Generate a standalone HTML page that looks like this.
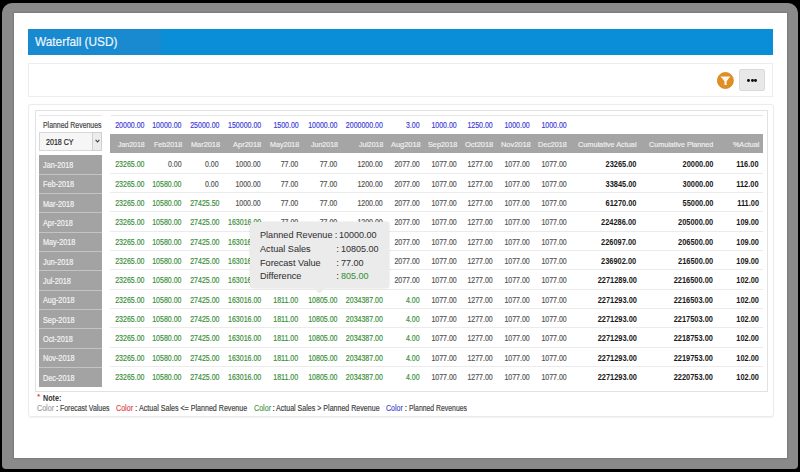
<!DOCTYPE html>
<html><head><meta charset="utf-8"><style>
html,body{margin:0;padding:0;}
body{width:800px;height:472px;position:relative;overflow:hidden;background:#000;font-family:"Liberation Sans",sans-serif;}
.b{position:absolute;}
.t{position:absolute;white-space:nowrap;line-height:1;-webkit-text-stroke:0.18px currentColor;}
</style></head><body>
<div class="b" style="left:2px;top:3px;width:796px;height:466px;background:#8a8a8a;border-radius:10px 10px 4px 4px;"></div>
<div class="b" style="left:13.6px;top:13.4px;width:773.1px;height:445.1px;background:#fff;box-shadow:0 0 1.5px 1px rgba(0,0,0,0.13);"></div>
<div class="b" style="left:28px;top:28.8px;width:745px;height:26.2px;background:#0a8ed8;"></div>
<div class="b" style="left:28px;top:28.8px;width:133px;height:26.2px;background:#1a8ad0;"></div>
<div class="t" style="left:35.00px;top:34.88px;font-size:13.2px;color:#eef7fd;transform:scaleX(0.8975653539773366);transform-origin:left 50%;">Waterfall (USD)</div>
<div class="b" style="left:28px;top:63px;width:745px;height:34px;box-sizing:border-box;border:1px solid #ededed;"></div>
<svg class="b" style="left:717px;top:72px" width="17" height="17" viewBox="0 0 17 17">
<circle cx="8.4" cy="8.5" r="8.0" fill="#e08f25" stroke="#d3841c" stroke-width="0.8"/>
<path d="M3.4 4.4 H13.3 Q10.4 7.6 9.6 9.6 V12.9 H7.5 V9.6 Q6.7 7.6 3.4 4.4 Z" fill="#fff" opacity="0.93"/>
</svg>
<div class="b" style="left:739px;top:69px;width:26px;height:22px;box-sizing:border-box;border:1px solid #d9d9d9;background:#e8e8e8;border-radius:2px;"></div>
<div class="b" style="left:747.30px;top:79.1px;width:2.8px;height:2.8px;border-radius:50%;background:#111;"></div>
<div class="b" style="left:750.80px;top:79.1px;width:2.8px;height:2.8px;border-radius:50%;background:#111;"></div>
<div class="b" style="left:754.30px;top:79.1px;width:2.8px;height:2.8px;border-radius:50%;background:#111;"></div>
<div class="b" style="left:28.2px;top:103.7px;width:745.8px;height:313.8px;box-sizing:border-box;border:1px solid #ebebeb;border-radius:3px;box-shadow:0 0.5px 1px rgba(0,0,0,0.06);"></div>
<div class="b" style="left:34.5px;top:110px;width:733.0px;height:281.5px;box-sizing:border-box;border:1px solid #e2e2e2;"></div>
<div class="b" style="left:38.5px;top:114.5px;width:63.5px;height:1.0px;background:#e6e6e6;"></div>
<div class="b" style="left:110.5px;top:114.5px;width:652.0px;height:1.0px;background:#e6e6e6;"></div>
<div class="t" style="left:43.40px;top:121.28px;font-size:8.5px;color:#444;transform:scaleX(0.8144796380090499);transform-origin:left 50%;">Planned Revenues</div>
<div class="b" style="left:39px;top:132.3px;width:62.7px;height:18.5px;box-sizing:border-box;border:1px solid #d8d8d8;background:#f6f6f6;"></div>
<div class="b" style="left:92.2px;top:132.3px;width:9.5px;height:18.5px;box-sizing:border-box;border:1px solid #cfcfcf;background:#ececec;"></div>
<svg class="b" style="left:94.5px;top:139px" width="5" height="4" viewBox="0 0 5 4"><path d="M0.6 0.8 L2.5 2.9 L4.4 0.8" stroke="#444" stroke-width="1.1" fill="none"/></svg>
<div class="t" style="left:45.80px;top:138.14px;font-size:8.3px;color:#222;transform:scaleX(0.8546135196143091);transform-origin:left 50%;">2018 CY</div>
<div class="t" style="right:656.00px;top:121.38px;font-size:8.5px;color:#3d3dd6;transform:scaleX(0.825);transform-origin:right 50%;">20000.00</div>
<div class="t" style="right:618.70px;top:121.38px;font-size:8.5px;color:#3d3dd6;transform:scaleX(0.825);transform-origin:right 50%;">10000.00</div>
<div class="t" style="right:581.00px;top:121.38px;font-size:8.5px;color:#3d3dd6;transform:scaleX(0.825);transform-origin:right 50%;">25000.00</div>
<div class="t" style="right:539.00px;top:121.38px;font-size:8.5px;color:#3d3dd6;transform:scaleX(0.825);transform-origin:right 50%;">150000.00</div>
<div class="t" style="right:501.50px;top:121.38px;font-size:8.5px;color:#3d3dd6;transform:scaleX(0.825);transform-origin:right 50%;">1500.00</div>
<div class="t" style="right:463.00px;top:121.38px;font-size:8.5px;color:#3d3dd6;transform:scaleX(0.825);transform-origin:right 50%;">10000.00</div>
<div class="t" style="right:417.00px;top:121.38px;font-size:8.5px;color:#3d3dd6;transform:scaleX(0.825);transform-origin:right 50%;">2000000.00</div>
<div class="t" style="right:380.00px;top:121.38px;font-size:8.5px;color:#3d3dd6;transform:scaleX(0.825);transform-origin:right 50%;">3.00</div>
<div class="t" style="right:343.50px;top:121.38px;font-size:8.5px;color:#3d3dd6;transform:scaleX(0.825);transform-origin:right 50%;">1000.00</div>
<div class="t" style="right:307.50px;top:121.38px;font-size:8.5px;color:#3d3dd6;transform:scaleX(0.825);transform-origin:right 50%;">1250.00</div>
<div class="t" style="right:270.50px;top:121.38px;font-size:8.5px;color:#3d3dd6;transform:scaleX(0.825);transform-origin:right 50%;">1000.00</div>
<div class="t" style="right:233.50px;top:121.38px;font-size:8.5px;color:#3d3dd6;transform:scaleX(0.825);transform-origin:right 50%;">1000.00</div>
<div class="b" style="left:110px;top:134.3px;width:653px;height:18.69999999999999px;background:#a5a5a5;"></div>
<div class="t" style="left:117.50px;top:140.70px;font-size:8px;color:#f0f0f0;transform:scaleX(0.8715484238820559);transform-origin:left 50%;">Jan2018</div>
<div class="t" style="left:153.75px;top:140.70px;font-size:8px;color:#f0f0f0;transform:scaleX(0.8945889245141115);transform-origin:left 50%;">Feb2018</div>
<div class="t" style="left:190.50px;top:140.70px;font-size:8px;color:#f0f0f0;transform:scaleX(0.9185572316585501);transform-origin:left 50%;">Mar2018</div>
<div class="t" style="left:233.00px;top:140.70px;font-size:8px;color:#f0f0f0;transform:scaleX(0.9340772886960116);transform-origin:left 50%;">Apr2018</div>
<div class="t" style="left:269.50px;top:140.70px;font-size:8px;color:#f0f0f0;transform:scaleX(0.8888551242118059);transform-origin:left 50%;">May2018</div>
<div class="t" style="left:310.50px;top:140.70px;font-size:8px;color:#f0f0f0;transform:scaleX(0.8796937362547854);transform-origin:left 50%;">Jun2018</div>
<div class="t" style="left:358.75px;top:140.70px;font-size:8px;color:#f0f0f0;transform:scaleX(0.8654146406744881);transform-origin:left 50%;">Jul2018</div>
<div class="t" style="left:390.75px;top:140.70px;font-size:8px;color:#f0f0f0;transform:scaleX(0.9288529836475041);transform-origin:left 50%;">Aug2018</div>
<div class="t" style="left:428.25px;top:140.70px;font-size:8px;color:#f0f0f0;transform:scaleX(0.91324200913242);transform-origin:left 50%;">Sep2018</div>
<div class="t" style="left:465.00px;top:140.70px;font-size:8px;color:#f0f0f0;transform:scaleX(0.9341931216931217);transform-origin:left 50%;">Oct2018</div>
<div class="t" style="left:500.75px;top:140.70px;font-size:8px;color:#f0f0f0;transform:scaleX(0.929070539095132);transform-origin:left 50%;">Nov2018</div>
<div class="t" style="left:538.25px;top:140.70px;font-size:8px;color:#f0f0f0;transform:scaleX(0.8978412772768083);transform-origin:left 50%;">Dec2018</div>
<div class="t" style="left:578.25px;top:140.70px;font-size:8px;color:#f0f0f0;transform:scaleX(0.9136520703590184);transform-origin:left 50%;">Cumulative Actual</div>
<div class="t" style="left:648.75px;top:140.70px;font-size:8px;color:#f0f0f0;transform:scaleX(0.8974247053688346);transform-origin:left 50%;">Cumulative Planned</div>
<div class="t" style="left:732.50px;top:140.70px;font-size:8px;color:#f0f0f0;transform:scaleX(0.8944543828264758);transform-origin:left 50%;">%Actual</div>
<div class="b" style="left:39px;top:154.8px;width:62.7px;height:232.0px;background:#a3a3a3;"></div>
<div class="b" style="left:39px;top:173.63px;width:62.7px;height:1.0px;background:#c4c4c4;"></div>
<div class="b" style="left:39px;top:192.96px;width:62.7px;height:1.0px;background:#c4c4c4;"></div>
<div class="b" style="left:39px;top:212.29px;width:62.7px;height:1.0px;background:#c4c4c4;"></div>
<div class="b" style="left:39px;top:231.62px;width:62.7px;height:1.0px;background:#c4c4c4;"></div>
<div class="b" style="left:39px;top:250.95px;width:62.7px;height:1.0px;background:#c4c4c4;"></div>
<div class="b" style="left:39px;top:270.28px;width:62.7px;height:1.0px;background:#c4c4c4;"></div>
<div class="b" style="left:39px;top:289.61px;width:62.7px;height:1.0px;background:#c4c4c4;"></div>
<div class="b" style="left:39px;top:308.94px;width:62.7px;height:1.0px;background:#c4c4c4;"></div>
<div class="b" style="left:39px;top:328.27px;width:62.7px;height:1.0px;background:#c4c4c4;"></div>
<div class="b" style="left:39px;top:347.6px;width:62.7px;height:1.0px;background:#c4c4c4;"></div>
<div class="b" style="left:39px;top:366.93px;width:62.7px;height:1.0px;background:#c4c4c4;"></div>
<div class="t" style="left:43.00px;top:160.97px;font-size:8.5px;color:#f4f4f4;transform:scaleX(0.855);transform-origin:left 50%;">Jan-2018</div>
<div class="t" style="left:43.00px;top:180.30px;font-size:8.5px;color:#f4f4f4;transform:scaleX(0.855);transform-origin:left 50%;">Feb-2018</div>
<div class="t" style="left:43.00px;top:199.63px;font-size:8.5px;color:#f4f4f4;transform:scaleX(0.855);transform-origin:left 50%;">Mar-2018</div>
<div class="t" style="left:43.00px;top:218.97px;font-size:8.5px;color:#f4f4f4;transform:scaleX(0.855);transform-origin:left 50%;">Apr-2018</div>
<div class="t" style="left:43.00px;top:238.29px;font-size:8.5px;color:#f4f4f4;transform:scaleX(0.855);transform-origin:left 50%;">May-2018</div>
<div class="t" style="left:43.00px;top:257.62px;font-size:8.5px;color:#f4f4f4;transform:scaleX(0.855);transform-origin:left 50%;">Jun-2018</div>
<div class="t" style="left:43.00px;top:276.95px;font-size:8.5px;color:#f4f4f4;transform:scaleX(0.855);transform-origin:left 50%;">Jul-2018</div>
<div class="t" style="left:43.00px;top:296.28px;font-size:8.5px;color:#f4f4f4;transform:scaleX(0.855);transform-origin:left 50%;">Aug-2018</div>
<div class="t" style="left:43.00px;top:315.61px;font-size:8.5px;color:#f4f4f4;transform:scaleX(0.855);transform-origin:left 50%;">Sep-2018</div>
<div class="t" style="left:43.00px;top:334.94px;font-size:8.5px;color:#f4f4f4;transform:scaleX(0.855);transform-origin:left 50%;">Oct-2018</div>
<div class="t" style="left:43.00px;top:354.27px;font-size:8.5px;color:#f4f4f4;transform:scaleX(0.855);transform-origin:left 50%;">Nov-2018</div>
<div class="t" style="left:43.00px;top:373.60px;font-size:8.5px;color:#f4f4f4;transform:scaleX(0.855);transform-origin:left 50%;">Dec-2018</div>
<div class="t" style="right:656.00px;top:160.38px;font-size:8.5px;color:#3a8f3a;transform:scaleX(0.825);transform-origin:right 50%;">23265.00</div>
<div class="t" style="right:618.70px;top:160.38px;font-size:8.5px;color:#555555;transform:scaleX(0.825);transform-origin:right 50%;">0.00</div>
<div class="t" style="right:581.00px;top:160.38px;font-size:8.5px;color:#555555;transform:scaleX(0.825);transform-origin:right 50%;">0.00</div>
<div class="t" style="right:539.00px;top:160.38px;font-size:8.5px;color:#555555;transform:scaleX(0.825);transform-origin:right 50%;">1000.00</div>
<div class="t" style="right:501.50px;top:160.38px;font-size:8.5px;color:#555555;transform:scaleX(0.825);transform-origin:right 50%;">77.00</div>
<div class="t" style="right:463.00px;top:160.38px;font-size:8.5px;color:#555555;transform:scaleX(0.825);transform-origin:right 50%;">77.00</div>
<div class="t" style="right:417.00px;top:160.38px;font-size:8.5px;color:#555555;transform:scaleX(0.825);transform-origin:right 50%;">1200.00</div>
<div class="t" style="right:380.00px;top:160.38px;font-size:8.5px;color:#555555;transform:scaleX(0.825);transform-origin:right 50%;">2077.00</div>
<div class="t" style="right:343.50px;top:160.38px;font-size:8.5px;color:#555555;transform:scaleX(0.825);transform-origin:right 50%;">1077.00</div>
<div class="t" style="right:307.50px;top:160.38px;font-size:8.5px;color:#555555;transform:scaleX(0.825);transform-origin:right 50%;">1277.00</div>
<div class="t" style="right:270.50px;top:160.38px;font-size:8.5px;color:#555555;transform:scaleX(0.825);transform-origin:right 50%;">1077.00</div>
<div class="t" style="right:233.50px;top:160.38px;font-size:8.5px;color:#555555;transform:scaleX(0.825);transform-origin:right 50%;">1077.00</div>
<div class="t" style="right:163.50px;top:160.38px;font-size:8.5px;color:#1a1a1a;font-weight:bold;-webkit-text-stroke:0;transform:scaleX(0.873);transform-origin:right 50%;">23265.00</div>
<div class="t" style="right:87.00px;top:160.38px;font-size:8.5px;color:#1a1a1a;font-weight:bold;-webkit-text-stroke:0;transform:scaleX(0.873);transform-origin:right 50%;">20000.00</div>
<div class="t" style="right:41.25px;top:160.38px;font-size:8.5px;color:#1a1a1a;font-weight:bold;-webkit-text-stroke:0;transform:scaleX(0.873);transform-origin:right 50%;">116.00</div>
<div class="b" style="left:110px;top:172.8px;width:653px;height:1.0px;background:#ebebeb;"></div>
<div class="t" style="right:656.00px;top:179.71px;font-size:8.5px;color:#3a8f3a;transform:scaleX(0.825);transform-origin:right 50%;">23265.00</div>
<div class="t" style="right:618.70px;top:179.71px;font-size:8.5px;color:#3a8f3a;transform:scaleX(0.825);transform-origin:right 50%;">10580.00</div>
<div class="t" style="right:581.00px;top:179.71px;font-size:8.5px;color:#555555;transform:scaleX(0.825);transform-origin:right 50%;">0.00</div>
<div class="t" style="right:539.00px;top:179.71px;font-size:8.5px;color:#555555;transform:scaleX(0.825);transform-origin:right 50%;">1000.00</div>
<div class="t" style="right:501.50px;top:179.71px;font-size:8.5px;color:#555555;transform:scaleX(0.825);transform-origin:right 50%;">77.00</div>
<div class="t" style="right:463.00px;top:179.71px;font-size:8.5px;color:#555555;transform:scaleX(0.825);transform-origin:right 50%;">77.00</div>
<div class="t" style="right:417.00px;top:179.71px;font-size:8.5px;color:#555555;transform:scaleX(0.825);transform-origin:right 50%;">1200.00</div>
<div class="t" style="right:380.00px;top:179.71px;font-size:8.5px;color:#555555;transform:scaleX(0.825);transform-origin:right 50%;">2077.00</div>
<div class="t" style="right:343.50px;top:179.71px;font-size:8.5px;color:#555555;transform:scaleX(0.825);transform-origin:right 50%;">1077.00</div>
<div class="t" style="right:307.50px;top:179.71px;font-size:8.5px;color:#555555;transform:scaleX(0.825);transform-origin:right 50%;">1277.00</div>
<div class="t" style="right:270.50px;top:179.71px;font-size:8.5px;color:#555555;transform:scaleX(0.825);transform-origin:right 50%;">1077.00</div>
<div class="t" style="right:233.50px;top:179.71px;font-size:8.5px;color:#555555;transform:scaleX(0.825);transform-origin:right 50%;">1077.00</div>
<div class="t" style="right:163.50px;top:179.71px;font-size:8.5px;color:#1a1a1a;font-weight:bold;-webkit-text-stroke:0;transform:scaleX(0.873);transform-origin:right 50%;">33845.00</div>
<div class="t" style="right:87.00px;top:179.71px;font-size:8.5px;color:#1a1a1a;font-weight:bold;-webkit-text-stroke:0;transform:scaleX(0.873);transform-origin:right 50%;">30000.00</div>
<div class="t" style="right:41.25px;top:179.71px;font-size:8.5px;color:#1a1a1a;font-weight:bold;-webkit-text-stroke:0;transform:scaleX(0.873);transform-origin:right 50%;">112.00</div>
<div class="b" style="left:110px;top:192.13px;width:653px;height:1.0px;background:#ebebeb;"></div>
<div class="t" style="right:656.00px;top:199.03px;font-size:8.5px;color:#3a8f3a;transform:scaleX(0.825);transform-origin:right 50%;">23265.00</div>
<div class="t" style="right:618.70px;top:199.03px;font-size:8.5px;color:#3a8f3a;transform:scaleX(0.825);transform-origin:right 50%;">10580.00</div>
<div class="t" style="right:581.00px;top:199.03px;font-size:8.5px;color:#3a8f3a;transform:scaleX(0.825);transform-origin:right 50%;">27425.50</div>
<div class="t" style="right:539.00px;top:199.03px;font-size:8.5px;color:#555555;transform:scaleX(0.825);transform-origin:right 50%;">1000.00</div>
<div class="t" style="right:501.50px;top:199.03px;font-size:8.5px;color:#555555;transform:scaleX(0.825);transform-origin:right 50%;">77.00</div>
<div class="t" style="right:463.00px;top:199.03px;font-size:8.5px;color:#555555;transform:scaleX(0.825);transform-origin:right 50%;">77.00</div>
<div class="t" style="right:417.00px;top:199.03px;font-size:8.5px;color:#555555;transform:scaleX(0.825);transform-origin:right 50%;">1200.00</div>
<div class="t" style="right:380.00px;top:199.03px;font-size:8.5px;color:#555555;transform:scaleX(0.825);transform-origin:right 50%;">2077.00</div>
<div class="t" style="right:343.50px;top:199.03px;font-size:8.5px;color:#555555;transform:scaleX(0.825);transform-origin:right 50%;">1077.00</div>
<div class="t" style="right:307.50px;top:199.03px;font-size:8.5px;color:#555555;transform:scaleX(0.825);transform-origin:right 50%;">1277.00</div>
<div class="t" style="right:270.50px;top:199.03px;font-size:8.5px;color:#555555;transform:scaleX(0.825);transform-origin:right 50%;">1077.00</div>
<div class="t" style="right:233.50px;top:199.03px;font-size:8.5px;color:#555555;transform:scaleX(0.825);transform-origin:right 50%;">1077.00</div>
<div class="t" style="right:163.50px;top:199.03px;font-size:8.5px;color:#1a1a1a;font-weight:bold;-webkit-text-stroke:0;transform:scaleX(0.873);transform-origin:right 50%;">61270.00</div>
<div class="t" style="right:87.00px;top:199.03px;font-size:8.5px;color:#1a1a1a;font-weight:bold;-webkit-text-stroke:0;transform:scaleX(0.873);transform-origin:right 50%;">55000.00</div>
<div class="t" style="right:41.25px;top:199.03px;font-size:8.5px;color:#1a1a1a;font-weight:bold;-webkit-text-stroke:0;transform:scaleX(0.873);transform-origin:right 50%;">111.00</div>
<div class="b" style="left:110px;top:211.46px;width:653px;height:1.0px;background:#ebebeb;"></div>
<div class="t" style="right:656.00px;top:218.36px;font-size:8.5px;color:#3a8f3a;transform:scaleX(0.825);transform-origin:right 50%;">23265.00</div>
<div class="t" style="right:618.70px;top:218.36px;font-size:8.5px;color:#3a8f3a;transform:scaleX(0.825);transform-origin:right 50%;">10580.00</div>
<div class="t" style="right:581.00px;top:218.36px;font-size:8.5px;color:#3a8f3a;transform:scaleX(0.825);transform-origin:right 50%;">27425.00</div>
<div class="t" style="right:539.00px;top:218.36px;font-size:8.5px;color:#3a8f3a;transform:scaleX(0.825);transform-origin:right 50%;">163016.00</div>
<div class="t" style="right:501.50px;top:218.36px;font-size:8.5px;color:#555555;transform:scaleX(0.825);transform-origin:right 50%;">77.00</div>
<div class="t" style="right:463.00px;top:218.36px;font-size:8.5px;color:#555555;transform:scaleX(0.825);transform-origin:right 50%;">77.00</div>
<div class="t" style="right:417.00px;top:218.36px;font-size:8.5px;color:#555555;transform:scaleX(0.825);transform-origin:right 50%;">1200.00</div>
<div class="t" style="right:380.00px;top:218.36px;font-size:8.5px;color:#555555;transform:scaleX(0.825);transform-origin:right 50%;">2077.00</div>
<div class="t" style="right:343.50px;top:218.36px;font-size:8.5px;color:#555555;transform:scaleX(0.825);transform-origin:right 50%;">1077.00</div>
<div class="t" style="right:307.50px;top:218.36px;font-size:8.5px;color:#555555;transform:scaleX(0.825);transform-origin:right 50%;">1277.00</div>
<div class="t" style="right:270.50px;top:218.36px;font-size:8.5px;color:#555555;transform:scaleX(0.825);transform-origin:right 50%;">1077.00</div>
<div class="t" style="right:233.50px;top:218.36px;font-size:8.5px;color:#555555;transform:scaleX(0.825);transform-origin:right 50%;">1077.00</div>
<div class="t" style="right:163.50px;top:218.36px;font-size:8.5px;color:#1a1a1a;font-weight:bold;-webkit-text-stroke:0;transform:scaleX(0.873);transform-origin:right 50%;">224286.00</div>
<div class="t" style="right:87.00px;top:218.36px;font-size:8.5px;color:#1a1a1a;font-weight:bold;-webkit-text-stroke:0;transform:scaleX(0.873);transform-origin:right 50%;">205000.00</div>
<div class="t" style="right:41.25px;top:218.36px;font-size:8.5px;color:#1a1a1a;font-weight:bold;-webkit-text-stroke:0;transform:scaleX(0.873);transform-origin:right 50%;">109.00</div>
<div class="b" style="left:110px;top:230.79px;width:653px;height:1.0px;background:#ebebeb;"></div>
<div class="t" style="right:656.00px;top:237.69px;font-size:8.5px;color:#3a8f3a;transform:scaleX(0.825);transform-origin:right 50%;">23265.00</div>
<div class="t" style="right:618.70px;top:237.69px;font-size:8.5px;color:#3a8f3a;transform:scaleX(0.825);transform-origin:right 50%;">10580.00</div>
<div class="t" style="right:581.00px;top:237.69px;font-size:8.5px;color:#3a8f3a;transform:scaleX(0.825);transform-origin:right 50%;">27425.00</div>
<div class="t" style="right:539.00px;top:237.69px;font-size:8.5px;color:#3a8f3a;transform:scaleX(0.825);transform-origin:right 50%;">163016.00</div>
<div class="t" style="right:501.50px;top:237.69px;font-size:8.5px;color:#3a8f3a;transform:scaleX(0.825);transform-origin:right 50%;">1811.00</div>
<div class="t" style="right:463.00px;top:237.69px;font-size:8.5px;color:#555555;transform:scaleX(0.825);transform-origin:right 50%;">77.00</div>
<div class="t" style="right:417.00px;top:237.69px;font-size:8.5px;color:#555555;transform:scaleX(0.825);transform-origin:right 50%;">1200.00</div>
<div class="t" style="right:380.00px;top:237.69px;font-size:8.5px;color:#555555;transform:scaleX(0.825);transform-origin:right 50%;">2077.00</div>
<div class="t" style="right:343.50px;top:237.69px;font-size:8.5px;color:#555555;transform:scaleX(0.825);transform-origin:right 50%;">1077.00</div>
<div class="t" style="right:307.50px;top:237.69px;font-size:8.5px;color:#555555;transform:scaleX(0.825);transform-origin:right 50%;">1277.00</div>
<div class="t" style="right:270.50px;top:237.69px;font-size:8.5px;color:#555555;transform:scaleX(0.825);transform-origin:right 50%;">1077.00</div>
<div class="t" style="right:233.50px;top:237.69px;font-size:8.5px;color:#555555;transform:scaleX(0.825);transform-origin:right 50%;">1077.00</div>
<div class="t" style="right:163.50px;top:237.69px;font-size:8.5px;color:#1a1a1a;font-weight:bold;-webkit-text-stroke:0;transform:scaleX(0.873);transform-origin:right 50%;">226097.00</div>
<div class="t" style="right:87.00px;top:237.69px;font-size:8.5px;color:#1a1a1a;font-weight:bold;-webkit-text-stroke:0;transform:scaleX(0.873);transform-origin:right 50%;">206500.00</div>
<div class="t" style="right:41.25px;top:237.69px;font-size:8.5px;color:#1a1a1a;font-weight:bold;-webkit-text-stroke:0;transform:scaleX(0.873);transform-origin:right 50%;">109.00</div>
<div class="b" style="left:110px;top:250.12px;width:653px;height:1.0px;background:#ebebeb;"></div>
<div class="t" style="right:656.00px;top:257.02px;font-size:8.5px;color:#3a8f3a;transform:scaleX(0.825);transform-origin:right 50%;">23265.00</div>
<div class="t" style="right:618.70px;top:257.02px;font-size:8.5px;color:#3a8f3a;transform:scaleX(0.825);transform-origin:right 50%;">10580.00</div>
<div class="t" style="right:581.00px;top:257.02px;font-size:8.5px;color:#3a8f3a;transform:scaleX(0.825);transform-origin:right 50%;">27425.00</div>
<div class="t" style="right:539.00px;top:257.02px;font-size:8.5px;color:#3a8f3a;transform:scaleX(0.825);transform-origin:right 50%;">163016.00</div>
<div class="t" style="right:501.50px;top:257.02px;font-size:8.5px;color:#3a8f3a;transform:scaleX(0.825);transform-origin:right 50%;">1811.00</div>
<div class="t" style="right:463.00px;top:257.02px;font-size:8.5px;color:#3a8f3a;transform:scaleX(0.825);transform-origin:right 50%;">10805.00</div>
<div class="t" style="right:417.00px;top:257.02px;font-size:8.5px;color:#555555;transform:scaleX(0.825);transform-origin:right 50%;">1200.00</div>
<div class="t" style="right:380.00px;top:257.02px;font-size:8.5px;color:#555555;transform:scaleX(0.825);transform-origin:right 50%;">2077.00</div>
<div class="t" style="right:343.50px;top:257.02px;font-size:8.5px;color:#555555;transform:scaleX(0.825);transform-origin:right 50%;">1077.00</div>
<div class="t" style="right:307.50px;top:257.02px;font-size:8.5px;color:#555555;transform:scaleX(0.825);transform-origin:right 50%;">1277.00</div>
<div class="t" style="right:270.50px;top:257.02px;font-size:8.5px;color:#555555;transform:scaleX(0.825);transform-origin:right 50%;">1077.00</div>
<div class="t" style="right:233.50px;top:257.02px;font-size:8.5px;color:#555555;transform:scaleX(0.825);transform-origin:right 50%;">1077.00</div>
<div class="t" style="right:163.50px;top:257.02px;font-size:8.5px;color:#1a1a1a;font-weight:bold;-webkit-text-stroke:0;transform:scaleX(0.873);transform-origin:right 50%;">236902.00</div>
<div class="t" style="right:87.00px;top:257.02px;font-size:8.5px;color:#1a1a1a;font-weight:bold;-webkit-text-stroke:0;transform:scaleX(0.873);transform-origin:right 50%;">216500.00</div>
<div class="t" style="right:41.25px;top:257.02px;font-size:8.5px;color:#1a1a1a;font-weight:bold;-webkit-text-stroke:0;transform:scaleX(0.873);transform-origin:right 50%;">109.00</div>
<div class="b" style="left:110px;top:269.45px;width:653px;height:1.0px;background:#ebebeb;"></div>
<div class="t" style="right:656.00px;top:276.35px;font-size:8.5px;color:#3a8f3a;transform:scaleX(0.825);transform-origin:right 50%;">23265.00</div>
<div class="t" style="right:618.70px;top:276.35px;font-size:8.5px;color:#3a8f3a;transform:scaleX(0.825);transform-origin:right 50%;">10580.00</div>
<div class="t" style="right:581.00px;top:276.35px;font-size:8.5px;color:#3a8f3a;transform:scaleX(0.825);transform-origin:right 50%;">27425.00</div>
<div class="t" style="right:539.00px;top:276.35px;font-size:8.5px;color:#3a8f3a;transform:scaleX(0.825);transform-origin:right 50%;">163016.00</div>
<div class="t" style="right:501.50px;top:276.35px;font-size:8.5px;color:#3a8f3a;transform:scaleX(0.825);transform-origin:right 50%;">1811.00</div>
<div class="t" style="right:463.00px;top:276.35px;font-size:8.5px;color:#3a8f3a;transform:scaleX(0.825);transform-origin:right 50%;">10805.00</div>
<div class="t" style="right:417.00px;top:276.35px;font-size:8.5px;color:#3a8f3a;transform:scaleX(0.825);transform-origin:right 50%;">2034387.00</div>
<div class="t" style="right:380.00px;top:276.35px;font-size:8.5px;color:#555555;transform:scaleX(0.825);transform-origin:right 50%;">2077.00</div>
<div class="t" style="right:343.50px;top:276.35px;font-size:8.5px;color:#555555;transform:scaleX(0.825);transform-origin:right 50%;">1077.00</div>
<div class="t" style="right:307.50px;top:276.35px;font-size:8.5px;color:#555555;transform:scaleX(0.825);transform-origin:right 50%;">1277.00</div>
<div class="t" style="right:270.50px;top:276.35px;font-size:8.5px;color:#555555;transform:scaleX(0.825);transform-origin:right 50%;">1077.00</div>
<div class="t" style="right:233.50px;top:276.35px;font-size:8.5px;color:#555555;transform:scaleX(0.825);transform-origin:right 50%;">1077.00</div>
<div class="t" style="right:163.50px;top:276.35px;font-size:8.5px;color:#1a1a1a;font-weight:bold;-webkit-text-stroke:0;transform:scaleX(0.873);transform-origin:right 50%;">2271289.00</div>
<div class="t" style="right:87.00px;top:276.35px;font-size:8.5px;color:#1a1a1a;font-weight:bold;-webkit-text-stroke:0;transform:scaleX(0.873);transform-origin:right 50%;">2216500.00</div>
<div class="t" style="right:41.25px;top:276.35px;font-size:8.5px;color:#1a1a1a;font-weight:bold;-webkit-text-stroke:0;transform:scaleX(0.873);transform-origin:right 50%;">102.00</div>
<div class="b" style="left:110px;top:288.78px;width:653px;height:1.0px;background:#ebebeb;"></div>
<div class="t" style="right:656.00px;top:295.68px;font-size:8.5px;color:#3a8f3a;transform:scaleX(0.825);transform-origin:right 50%;">23265.00</div>
<div class="t" style="right:618.70px;top:295.68px;font-size:8.5px;color:#3a8f3a;transform:scaleX(0.825);transform-origin:right 50%;">10580.00</div>
<div class="t" style="right:581.00px;top:295.68px;font-size:8.5px;color:#3a8f3a;transform:scaleX(0.825);transform-origin:right 50%;">27425.00</div>
<div class="t" style="right:539.00px;top:295.68px;font-size:8.5px;color:#3a8f3a;transform:scaleX(0.825);transform-origin:right 50%;">163016.00</div>
<div class="t" style="right:501.50px;top:295.68px;font-size:8.5px;color:#3a8f3a;transform:scaleX(0.825);transform-origin:right 50%;">1811.00</div>
<div class="t" style="right:463.00px;top:295.68px;font-size:8.5px;color:#3a8f3a;transform:scaleX(0.825);transform-origin:right 50%;">10805.00</div>
<div class="t" style="right:417.00px;top:295.68px;font-size:8.5px;color:#3a8f3a;transform:scaleX(0.825);transform-origin:right 50%;">2034387.00</div>
<div class="t" style="right:380.00px;top:295.68px;font-size:8.5px;color:#3a8f3a;transform:scaleX(0.825);transform-origin:right 50%;">4.00</div>
<div class="t" style="right:343.50px;top:295.68px;font-size:8.5px;color:#555555;transform:scaleX(0.825);transform-origin:right 50%;">1077.00</div>
<div class="t" style="right:307.50px;top:295.68px;font-size:8.5px;color:#555555;transform:scaleX(0.825);transform-origin:right 50%;">1277.00</div>
<div class="t" style="right:270.50px;top:295.68px;font-size:8.5px;color:#555555;transform:scaleX(0.825);transform-origin:right 50%;">1077.00</div>
<div class="t" style="right:233.50px;top:295.68px;font-size:8.5px;color:#555555;transform:scaleX(0.825);transform-origin:right 50%;">1077.00</div>
<div class="t" style="right:163.50px;top:295.68px;font-size:8.5px;color:#1a1a1a;font-weight:bold;-webkit-text-stroke:0;transform:scaleX(0.873);transform-origin:right 50%;">2271293.00</div>
<div class="t" style="right:87.00px;top:295.68px;font-size:8.5px;color:#1a1a1a;font-weight:bold;-webkit-text-stroke:0;transform:scaleX(0.873);transform-origin:right 50%;">2216503.00</div>
<div class="t" style="right:41.25px;top:295.68px;font-size:8.5px;color:#1a1a1a;font-weight:bold;-webkit-text-stroke:0;transform:scaleX(0.873);transform-origin:right 50%;">102.00</div>
<div class="b" style="left:110px;top:308.11px;width:653px;height:1.0px;background:#ebebeb;"></div>
<div class="t" style="right:656.00px;top:315.01px;font-size:8.5px;color:#3a8f3a;transform:scaleX(0.825);transform-origin:right 50%;">23265.00</div>
<div class="t" style="right:618.70px;top:315.01px;font-size:8.5px;color:#3a8f3a;transform:scaleX(0.825);transform-origin:right 50%;">10580.00</div>
<div class="t" style="right:581.00px;top:315.01px;font-size:8.5px;color:#3a8f3a;transform:scaleX(0.825);transform-origin:right 50%;">27425.00</div>
<div class="t" style="right:539.00px;top:315.01px;font-size:8.5px;color:#3a8f3a;transform:scaleX(0.825);transform-origin:right 50%;">163016.00</div>
<div class="t" style="right:501.50px;top:315.01px;font-size:8.5px;color:#3a8f3a;transform:scaleX(0.825);transform-origin:right 50%;">1811.00</div>
<div class="t" style="right:463.00px;top:315.01px;font-size:8.5px;color:#3a8f3a;transform:scaleX(0.825);transform-origin:right 50%;">10805.00</div>
<div class="t" style="right:417.00px;top:315.01px;font-size:8.5px;color:#3a8f3a;transform:scaleX(0.825);transform-origin:right 50%;">2034387.00</div>
<div class="t" style="right:380.00px;top:315.01px;font-size:8.5px;color:#3a8f3a;transform:scaleX(0.825);transform-origin:right 50%;">4.00</div>
<div class="t" style="right:343.50px;top:315.01px;font-size:8.5px;color:#555555;transform:scaleX(0.825);transform-origin:right 50%;">1077.00</div>
<div class="t" style="right:307.50px;top:315.01px;font-size:8.5px;color:#555555;transform:scaleX(0.825);transform-origin:right 50%;">1277.00</div>
<div class="t" style="right:270.50px;top:315.01px;font-size:8.5px;color:#555555;transform:scaleX(0.825);transform-origin:right 50%;">1077.00</div>
<div class="t" style="right:233.50px;top:315.01px;font-size:8.5px;color:#555555;transform:scaleX(0.825);transform-origin:right 50%;">1077.00</div>
<div class="t" style="right:163.50px;top:315.01px;font-size:8.5px;color:#1a1a1a;font-weight:bold;-webkit-text-stroke:0;transform:scaleX(0.873);transform-origin:right 50%;">2271293.00</div>
<div class="t" style="right:87.00px;top:315.01px;font-size:8.5px;color:#1a1a1a;font-weight:bold;-webkit-text-stroke:0;transform:scaleX(0.873);transform-origin:right 50%;">2217503.00</div>
<div class="t" style="right:41.25px;top:315.01px;font-size:8.5px;color:#1a1a1a;font-weight:bold;-webkit-text-stroke:0;transform:scaleX(0.873);transform-origin:right 50%;">102.00</div>
<div class="b" style="left:110px;top:327.44px;width:653px;height:1.0px;background:#ebebeb;"></div>
<div class="t" style="right:656.00px;top:334.34px;font-size:8.5px;color:#3a8f3a;transform:scaleX(0.825);transform-origin:right 50%;">23265.00</div>
<div class="t" style="right:618.70px;top:334.34px;font-size:8.5px;color:#3a8f3a;transform:scaleX(0.825);transform-origin:right 50%;">10580.00</div>
<div class="t" style="right:581.00px;top:334.34px;font-size:8.5px;color:#3a8f3a;transform:scaleX(0.825);transform-origin:right 50%;">27425.00</div>
<div class="t" style="right:539.00px;top:334.34px;font-size:8.5px;color:#3a8f3a;transform:scaleX(0.825);transform-origin:right 50%;">163016.00</div>
<div class="t" style="right:501.50px;top:334.34px;font-size:8.5px;color:#3a8f3a;transform:scaleX(0.825);transform-origin:right 50%;">1811.00</div>
<div class="t" style="right:463.00px;top:334.34px;font-size:8.5px;color:#3a8f3a;transform:scaleX(0.825);transform-origin:right 50%;">10805.00</div>
<div class="t" style="right:417.00px;top:334.34px;font-size:8.5px;color:#3a8f3a;transform:scaleX(0.825);transform-origin:right 50%;">2034387.00</div>
<div class="t" style="right:380.00px;top:334.34px;font-size:8.5px;color:#3a8f3a;transform:scaleX(0.825);transform-origin:right 50%;">4.00</div>
<div class="t" style="right:343.50px;top:334.34px;font-size:8.5px;color:#555555;transform:scaleX(0.825);transform-origin:right 50%;">1077.00</div>
<div class="t" style="right:307.50px;top:334.34px;font-size:8.5px;color:#555555;transform:scaleX(0.825);transform-origin:right 50%;">1277.00</div>
<div class="t" style="right:270.50px;top:334.34px;font-size:8.5px;color:#555555;transform:scaleX(0.825);transform-origin:right 50%;">1077.00</div>
<div class="t" style="right:233.50px;top:334.34px;font-size:8.5px;color:#555555;transform:scaleX(0.825);transform-origin:right 50%;">1077.00</div>
<div class="t" style="right:163.50px;top:334.34px;font-size:8.5px;color:#1a1a1a;font-weight:bold;-webkit-text-stroke:0;transform:scaleX(0.873);transform-origin:right 50%;">2271293.00</div>
<div class="t" style="right:87.00px;top:334.34px;font-size:8.5px;color:#1a1a1a;font-weight:bold;-webkit-text-stroke:0;transform:scaleX(0.873);transform-origin:right 50%;">2218753.00</div>
<div class="t" style="right:41.25px;top:334.34px;font-size:8.5px;color:#1a1a1a;font-weight:bold;-webkit-text-stroke:0;transform:scaleX(0.873);transform-origin:right 50%;">102.00</div>
<div class="b" style="left:110px;top:346.77px;width:653px;height:1.0px;background:#ebebeb;"></div>
<div class="t" style="right:656.00px;top:353.67px;font-size:8.5px;color:#3a8f3a;transform:scaleX(0.825);transform-origin:right 50%;">23265.00</div>
<div class="t" style="right:618.70px;top:353.67px;font-size:8.5px;color:#3a8f3a;transform:scaleX(0.825);transform-origin:right 50%;">10580.00</div>
<div class="t" style="right:581.00px;top:353.67px;font-size:8.5px;color:#3a8f3a;transform:scaleX(0.825);transform-origin:right 50%;">27425.00</div>
<div class="t" style="right:539.00px;top:353.67px;font-size:8.5px;color:#3a8f3a;transform:scaleX(0.825);transform-origin:right 50%;">163016.00</div>
<div class="t" style="right:501.50px;top:353.67px;font-size:8.5px;color:#3a8f3a;transform:scaleX(0.825);transform-origin:right 50%;">1811.00</div>
<div class="t" style="right:463.00px;top:353.67px;font-size:8.5px;color:#3a8f3a;transform:scaleX(0.825);transform-origin:right 50%;">10805.00</div>
<div class="t" style="right:417.00px;top:353.67px;font-size:8.5px;color:#3a8f3a;transform:scaleX(0.825);transform-origin:right 50%;">2034387.00</div>
<div class="t" style="right:380.00px;top:353.67px;font-size:8.5px;color:#3a8f3a;transform:scaleX(0.825);transform-origin:right 50%;">4.00</div>
<div class="t" style="right:343.50px;top:353.67px;font-size:8.5px;color:#555555;transform:scaleX(0.825);transform-origin:right 50%;">1077.00</div>
<div class="t" style="right:307.50px;top:353.67px;font-size:8.5px;color:#555555;transform:scaleX(0.825);transform-origin:right 50%;">1277.00</div>
<div class="t" style="right:270.50px;top:353.67px;font-size:8.5px;color:#555555;transform:scaleX(0.825);transform-origin:right 50%;">1077.00</div>
<div class="t" style="right:233.50px;top:353.67px;font-size:8.5px;color:#555555;transform:scaleX(0.825);transform-origin:right 50%;">1077.00</div>
<div class="t" style="right:163.50px;top:353.67px;font-size:8.5px;color:#1a1a1a;font-weight:bold;-webkit-text-stroke:0;transform:scaleX(0.873);transform-origin:right 50%;">2271293.00</div>
<div class="t" style="right:87.00px;top:353.67px;font-size:8.5px;color:#1a1a1a;font-weight:bold;-webkit-text-stroke:0;transform:scaleX(0.873);transform-origin:right 50%;">2219753.00</div>
<div class="t" style="right:41.25px;top:353.67px;font-size:8.5px;color:#1a1a1a;font-weight:bold;-webkit-text-stroke:0;transform:scaleX(0.873);transform-origin:right 50%;">102.00</div>
<div class="b" style="left:110px;top:366.1px;width:653px;height:1.0px;background:#ebebeb;"></div>
<div class="t" style="right:656.00px;top:373.00px;font-size:8.5px;color:#3a8f3a;transform:scaleX(0.825);transform-origin:right 50%;">23265.00</div>
<div class="t" style="right:618.70px;top:373.00px;font-size:8.5px;color:#3a8f3a;transform:scaleX(0.825);transform-origin:right 50%;">10580.00</div>
<div class="t" style="right:581.00px;top:373.00px;font-size:8.5px;color:#3a8f3a;transform:scaleX(0.825);transform-origin:right 50%;">27425.00</div>
<div class="t" style="right:539.00px;top:373.00px;font-size:8.5px;color:#3a8f3a;transform:scaleX(0.825);transform-origin:right 50%;">163016.00</div>
<div class="t" style="right:501.50px;top:373.00px;font-size:8.5px;color:#3a8f3a;transform:scaleX(0.825);transform-origin:right 50%;">1811.00</div>
<div class="t" style="right:463.00px;top:373.00px;font-size:8.5px;color:#3a8f3a;transform:scaleX(0.825);transform-origin:right 50%;">10805.00</div>
<div class="t" style="right:417.00px;top:373.00px;font-size:8.5px;color:#3a8f3a;transform:scaleX(0.825);transform-origin:right 50%;">2034387.00</div>
<div class="t" style="right:380.00px;top:373.00px;font-size:8.5px;color:#3a8f3a;transform:scaleX(0.825);transform-origin:right 50%;">4.00</div>
<div class="t" style="right:343.50px;top:373.00px;font-size:8.5px;color:#555555;transform:scaleX(0.825);transform-origin:right 50%;">1077.00</div>
<div class="t" style="right:307.50px;top:373.00px;font-size:8.5px;color:#555555;transform:scaleX(0.825);transform-origin:right 50%;">1277.00</div>
<div class="t" style="right:270.50px;top:373.00px;font-size:8.5px;color:#555555;transform:scaleX(0.825);transform-origin:right 50%;">1077.00</div>
<div class="t" style="right:233.50px;top:373.00px;font-size:8.5px;color:#555555;transform:scaleX(0.825);transform-origin:right 50%;">1077.00</div>
<div class="t" style="right:163.50px;top:373.00px;font-size:8.5px;color:#1a1a1a;font-weight:bold;-webkit-text-stroke:0;transform:scaleX(0.873);transform-origin:right 50%;">2271293.00</div>
<div class="t" style="right:87.00px;top:373.00px;font-size:8.5px;color:#1a1a1a;font-weight:bold;-webkit-text-stroke:0;transform:scaleX(0.873);transform-origin:right 50%;">2220753.00</div>
<div class="t" style="right:41.25px;top:373.00px;font-size:8.5px;color:#1a1a1a;font-weight:bold;-webkit-text-stroke:0;transform:scaleX(0.873);transform-origin:right 50%;">102.00</div>
<div class="b" style="left:250.3px;top:221.6px;width:139px;height:66.7px;background:#ebebeb;border-radius:3px;box-shadow:0 0 2px rgba(0,0,0,0.18);"></div>
<svg class="b" style="left:313.8px;top:288px" width="11" height="6" viewBox="0 0 11 6"><path d="M0 0 L5.5 5.5 L11 0 Z" fill="#ebebeb"/></svg>
<div class="t" style="left:259.50px;top:230.34px;font-size:9.6px;color:#333;transform:scaleX(0.95);transform-origin:left 50%;-webkit-text-stroke:0.05px currentColor;">Planned Revenue</div>
<div class="t" style="left:334.70px;top:230.34px;font-size:9.6px;color:#333;-webkit-text-stroke:0.05px currentColor;">:</div>
<div class="t" style="left:339.40px;top:230.34px;font-size:9.6px;color:#333;transform:scaleX(0.94);transform-origin:left 50%;-webkit-text-stroke:0.05px currentColor;">10000.00</div>
<div class="t" style="left:259.50px;top:243.92px;font-size:9.6px;color:#333;transform:scaleX(0.95);transform-origin:left 50%;-webkit-text-stroke:0.05px currentColor;">Actual Sales</div>
<div class="t" style="left:336.20px;top:243.92px;font-size:9.6px;color:#333;-webkit-text-stroke:0.05px currentColor;">:</div>
<div class="t" style="left:341.20px;top:243.92px;font-size:9.6px;color:#333;transform:scaleX(0.94);transform-origin:left 50%;-webkit-text-stroke:0.05px currentColor;">10805.00</div>
<div class="t" style="left:259.50px;top:257.50px;font-size:9.6px;color:#333;transform:scaleX(0.95);transform-origin:left 50%;-webkit-text-stroke:0.05px currentColor;">Forecast Value</div>
<div class="t" style="left:336.20px;top:257.50px;font-size:9.6px;color:#333;-webkit-text-stroke:0.05px currentColor;">:</div>
<div class="t" style="left:341.20px;top:257.50px;font-size:9.6px;color:#333;transform:scaleX(0.94);transform-origin:left 50%;-webkit-text-stroke:0.05px currentColor;">77.00</div>
<div class="t" style="left:259.50px;top:271.08px;font-size:9.6px;color:#333;transform:scaleX(0.95);transform-origin:left 50%;-webkit-text-stroke:0.05px currentColor;">Difference</div>
<div class="t" style="left:336.20px;top:271.08px;font-size:9.6px;color:#333;-webkit-text-stroke:0.05px currentColor;">:</div>
<div class="t" style="left:341.20px;top:271.08px;font-size:9.6px;color:#3a8f3a;transform:scaleX(0.94);transform-origin:left 50%;-webkit-text-stroke:0.05px currentColor;">805.00</div>
<div class="t" style="left:37.20px;top:393.35px;font-size:7px;color:#d9363e;font-weight:bold;-webkit-text-stroke:0;">*</div>
<div class="t" style="left:42.70px;top:393.55px;font-size:8.3px;color:#333;font-weight:bold;-webkit-text-stroke:0;transform:scaleX(0.8629429656001696);transform-origin:left 50%;">Note:</div>
<div class="t" style="left:37.00px;top:404.25px;font-size:8.3px;color:#a0a0a0;transform:scaleX(0.8571525361237009);transform-origin:left 50%;">Color</div>
<div class="t" style="left:56.00px;top:404.25px;font-size:8.3px;color:#444;">:</div>
<div class="t" style="left:60.10px;top:404.25px;font-size:8.3px;color:#444;transform:scaleX(0.8339963007209538);transform-origin:left 50%;">Forecast Values</div>
<div class="t" style="left:116.25px;top:404.25px;font-size:8.3px;color:#e2474f;transform:scaleX(0.8571525361237009);transform-origin:left 50%;">Color</div>
<div class="t" style="left:135.00px;top:404.25px;font-size:8.3px;color:#444;">:</div>
<div class="t" style="left:139.25px;top:404.25px;font-size:8.3px;color:#444;transform:scaleX(0.8562154904558791);transform-origin:left 50%;">Actual Sales &lt;= Planned Revenue</div>
<div class="t" style="left:254.00px;top:404.25px;font-size:8.3px;color:#4c9c4c;transform:scaleX(0.8571525361237009);transform-origin:left 50%;">Color</div>
<div class="t" style="left:272.50px;top:404.25px;font-size:8.3px;color:#444;">:</div>
<div class="t" style="left:276.00px;top:404.25px;font-size:8.3px;color:#444;transform:scaleX(0.8521086875529084);transform-origin:left 50%;">Actual Sales &gt; Planned Revenue</div>
<div class="t" style="left:386.20px;top:404.25px;font-size:8.3px;color:#4a4ad0;transform:scaleX(0.8470683886398932);transform-origin:left 50%;">Color</div>
<div class="t" style="left:404.80px;top:404.25px;font-size:8.3px;color:#444;">:</div>
<div class="t" style="left:409.00px;top:404.25px;font-size:8.3px;color:#444;transform:scaleX(0.8269612537908889);transform-origin:left 50%;">Planned Revenues</div>
</body></html>
